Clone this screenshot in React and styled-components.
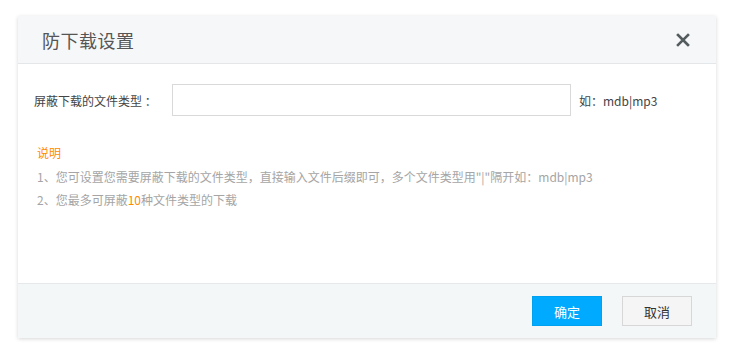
import React from 'react'
import styled, { createGlobalStyle } from 'styled-components'

const GlobalStyle = createGlobalStyle`
  html, body {
    margin: 0;
    padding: 0;
    background: #ffffff;
  }
  body {
    font-family: "Noto Sans CJK SC", "Noto Sans", sans-serif;
  }
`;

const Page = styled.div`
  width: 735px;
  height: 356px;
  padding: 16px 0 0 18px;
  box-sizing: border-box;
`;

const Dialog = styled.div`
  width: 698px;
  height: 322px;
  display: flex;
  flex-direction: column;
  background: #ffffff;
  box-shadow: 0 1px 4px rgba(0, 0, 0, 0.16);
`;

const Header = styled.div`
  height: 47px;
  display: flex;
  align-items: center;
  justify-content: space-between;
  padding: 0 24px;
  background: #f5f7f8;
  border-bottom: 1px solid #e4e7e9;
`;

const Title = styled.div`
  font-size: 18px;
  color: #555555;
  letter-spacing: 0.5px;
`;

const CloseButton = styled.div`
  width: 16px;
  height: 16px;
  display: flex;
  align-items: center;
  justify-content: center;
  margin-right: 1px;
  cursor: pointer;
`;

const Body = styled.div`
  flex: 1;
  padding: 20px 16px 0 16px;
`;

const FieldRow = styled.div`
  display: flex;
  align-items: center;
  height: 32px;
`;

const Label = styled.div`
  width: 138px;
  font-size: 12px;
  color: #444444;
`;

const Input = styled.input`
  width: 399px;
  height: 32px;
  box-sizing: border-box;
  border: 1px solid #d9d9d9;
  outline: none;
  padding: 0 8px;
  font-size: 12px;
`;

const Hint = styled.div`
  margin-left: 8px;
  font-size: 12px;
  color: #444444;
`;

const Notes = styled.div`
  margin-top: 25px;
  padding-left: 3px;
  font-size: 12px;
  line-height: 23.5px;
  color: #a5a5a5;
`;

const NoteTitle = styled.div`
  color: #ff8a00;
`;

const Accent = styled.span`
  color: #ff8a00;
`;

const Footer = styled.div`
  height: 54px;
  display: flex;
  align-items: center;
  justify-content: flex-end;
  gap: 20px;
  padding: 0 24px;
  background: #f4f7f8;
  border-top: 1px solid #e6e9eb;
`;

const Button = styled.button`
  width: 70px;
  height: 30px;
  box-sizing: border-box;
  font-family: inherit;
  font-size: 13px;
  cursor: pointer;
  border: 1px solid ${p => (p.primary ? '#00a2f0' : '#d7d7d7')};
  background: ${p => (p.primary ? '#00aaff' : '#f5f5f5')};
  color: ${p => (p.primary ? '#ffffff' : '#333333')};
`;

const App = () => {
  return (
    <Page>
      <GlobalStyle />
      <Dialog>
        <Header>
          <Title>防下载设置</Title>
          <CloseButton>
            <svg width="14" height="14" viewBox="0 0 14 14">
              <path d="M2 2 L12 12 M12 2 L2 12" stroke="#555c60" strokeWidth="2.6" strokeLinecap="square" />
            </svg>
          </CloseButton>
        </Header>
        <Body>
          <FieldRow>
            <Label>屏蔽下载的文件类型 ：</Label>
            <Input />
            <Hint>如：mdb|mp3</Hint>
          </FieldRow>
          <Notes>
            <NoteTitle>说明</NoteTitle>
            <div>1、您可设置您需要屏蔽下载的文件类型，直接输入文件后缀即可，多个文件类型用"|"隔开如：mdb|mp3</div>
            <div>2、您最多可屏蔽<Accent>10</Accent>种文件类型的下载</div>
          </Notes>
        </Body>
        <Footer>
          <Button primary>确定</Button>
          <Button>取消</Button>
        </Footer>
      </Dialog>
    </Page>
  )
}

export default App
